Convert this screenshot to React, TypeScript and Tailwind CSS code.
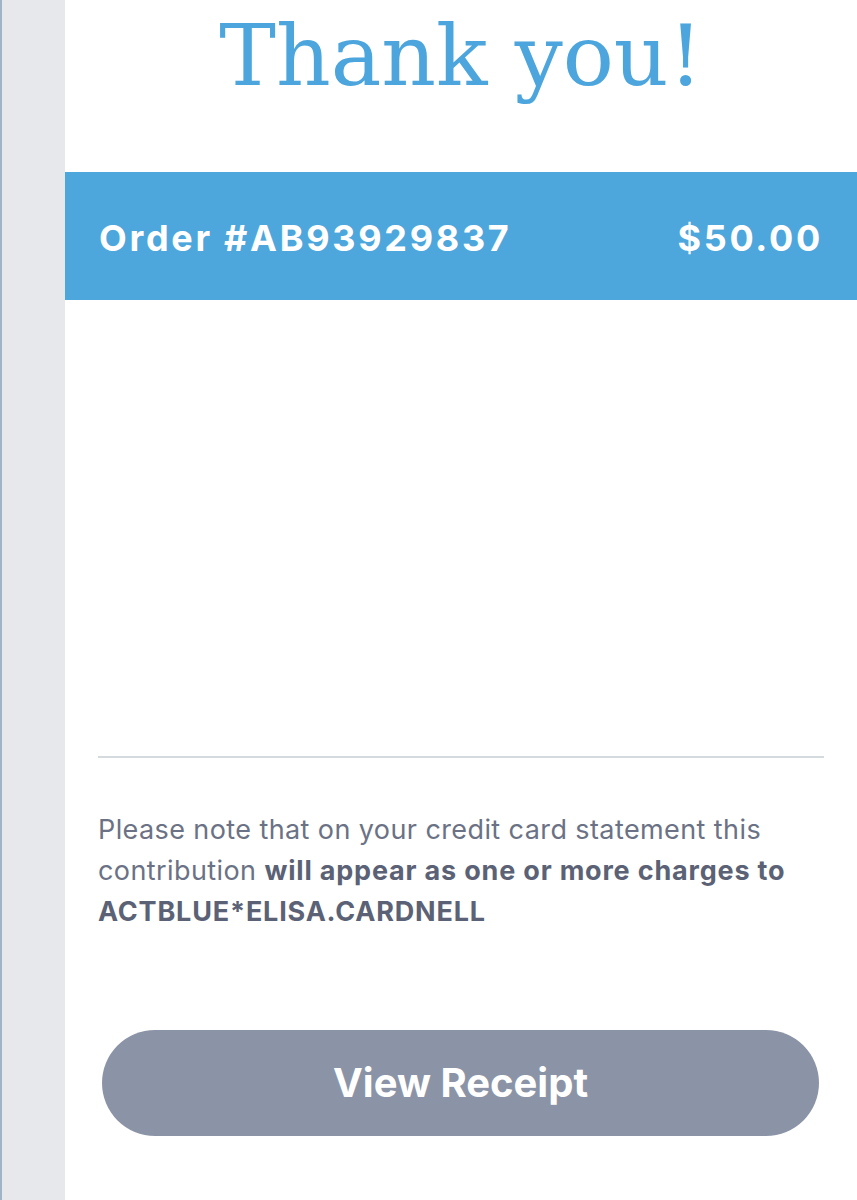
export default function App() {
  return (
    <div className="flex min-h-[1200px] w-full bg-white font-['Inter',sans-serif]">
      {/* grey side rail */}
      <div className="w-[65px] shrink-0 border-l-2 border-[#9fb4c4] bg-[#e6e8ec]" />

      <main className="flex flex-1 flex-col">
        <h1 className="pt-[3px] text-center font-['DejaVu_Serif',serif] text-[85px] font-light leading-[106px] text-[#4ca6dd]">
          Thank you!
        </h1>

        <div className="mt-[63px] flex h-[128px] items-center justify-between bg-[#4da7dc] pl-[34px] pr-[34px] pt-[4px] text-[36px] font-bold tracking-[0.075em] text-white">
          <span>Order #AB93929837</span>
          <span>$50.00</span>
        </div>

        <div className="px-[33px]">
          <hr className="mt-[456px] border-t-2 border-[#d5dadf]" />

          <p className="mt-[51px] text-[27px] leading-[41px] tracking-[0.015em] text-[#6b7285]">
            Please note that on your credit card statement this contribution{" "}
            <strong className="font-bold tracking-[0.03em] text-[#5b6275]">
              will appear as one or more charges to ACTBLUE*ELISA.CARDNELL
            </strong>
          </p>

          <button className="mx-[4px] mt-[98px] flex h-[106px] w-[717px] items-center justify-center rounded-full bg-[#8b94a7] text-[40px] font-bold text-white">
            View Receipt
          </button>
        </div>
      </main>
    </div>
  );
}
